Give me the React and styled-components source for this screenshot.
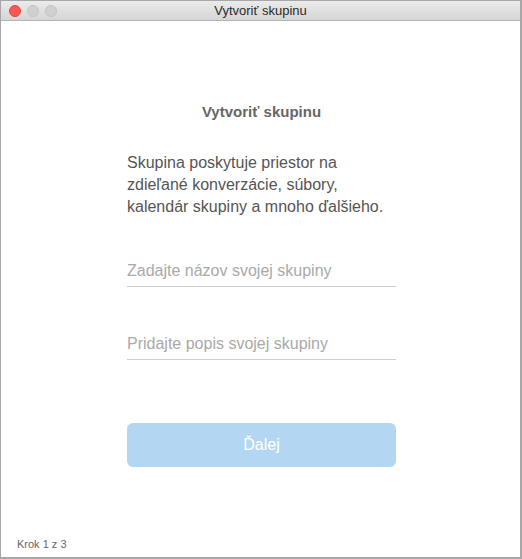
import React from 'react';
import styled, { createGlobalStyle } from 'styled-components';

const GlobalStyle = createGlobalStyle`
    html, body {
        margin: 0;
        padding: 0;
        background: #ffffff;
    }
    body {
        font-family: "Liberation Sans", Arial, sans-serif;
    }
`;

const Window = styled.div`
    box-sizing: border-box;
    width: 522px;
    height: 559px;
    border: 1px solid #a7a7a7;
    border-right-width: 2px;
    border-bottom-width: 2px;
    display: flex;
    flex-direction: column;
    background: #fff;
`;

const TitleBar = styled.div`
    position: relative;
    height: 19px;
    flex: none;
    display: flex;
    align-items: center;
    justify-content: center;
    background: linear-gradient(#ebebeb, #d5d5d5);
    border-bottom: 1px solid #b4b4b4;
    font-size: 13px;
    color: #2a2a2a;
`;

const Lights = styled.div`
    position: absolute;
    left: 8px;
    top: 4px;
    display: flex;
    gap: 6px;
`;

const Light = styled.span`
    width: 12px;
    height: 12px;
    border-radius: 50%;
    box-sizing: border-box;
    background: ${p => (p.$red ? '#fc5753' : '#d0d0d0')};
    border: 1px solid ${p => (p.$red ? '#e0443e' : '#c4c4c4')};
`;

const Body = styled.div`
    flex: 1;
    display: flex;
    flex-direction: column;
    align-items: center;
    padding: 81px 0 0 2px;
`;

const Form = styled.div`
    width: 269px;
    display: flex;
    flex-direction: column;
`;

const Heading = styled.h1`
    margin: 0;
    font-size: 15px;
    font-weight: bold;
    color: #666;
    text-align: center;
    line-height: 20px;
`;

const Intro = styled.p`
    margin: 30px 0 0;
    font-size: 16px;
    line-height: 22px;
    color: #555;
`;

const Field = styled.input`
    box-sizing: border-box;
    width: 100%;
    margin-top: ${p => p.$top}px;
    padding: 2px 0 4px;
    border: none;
    border-bottom: 1px solid #cfcfcf;
    outline: none;
    font-family: inherit;
    font-size: 16px;
    line-height: 22px;
    color: #333;
    background: transparent;
    &::placeholder {
        color: #a9a9a9;
    }
`;

const NextButton = styled.button`
    margin-top: 63px;
    height: 44px;
    border: none;
    border-radius: 6px;
    background: #b3d7f2;
    color: #fff;
    font-family: inherit;
    font-size: 16px;
`;

const Footer = styled.div`
    padding: 0 0 7px 16px;
    font-size: 11px;
    color: #666;
`;

export default function App() {
    return (
        <>
            <GlobalStyle />
            <Window>
                <TitleBar>
                    <Lights>
                        <Light $red />
                        <Light />
                        <Light />
                    </Lights>
                    Vytvoriť skupinu
                </TitleBar>
                <Body>
                    <Form>
                        <Heading>Vytvoriť skupinu</Heading>
                        <Intro>
                            Skupina poskytuje priestor na zdieľané konverzácie, súbory, kalendár skupiny a mnoho ďalšieho.
                        </Intro>
                        <Field $top={40} placeholder="Zadajte názov svojej skupiny" />
                        <Field $top={44} placeholder="Pridajte popis svojej skupiny" />
                        <NextButton disabled>Ďalej</NextButton>
                    </Form>
                </Body>
                <Footer>Krok 1 z 3</Footer>
            </Window>
        </>
    );
}
